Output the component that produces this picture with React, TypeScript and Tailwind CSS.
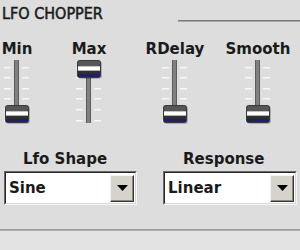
import React from 'react'

const TICKS = [8, 18, 29, 39, 50, 61]

const SLIDERS = [
  { label: 'Min', pos: 'bottom', col: 'w-[34px] ml-0' },
  { label: 'Max', pos: 'top', col: 'w-[58px] ml-[26px]' },
  { label: 'RDelay', pos: 'bottom', col: 'w-[70px] ml-[22px]' },
  { label: 'Smooth', pos: 'bottom', col: 'w-[66px] ml-[15px]' },
] as const

function Fader({ pos }: { pos: 'top' | 'bottom' }) {
  const ty = pos === 'top' ? 1 : 46
  return (
    <svg width="26" height="66" viewBox="0 0 26 66" className="block">
      {TICKS.map((y) => (
        <g key={y}>
          <rect x="0" y={y} width="7" height="1.5" fill="#f8f8f8" />
          <rect x="18" y={y} width="7" height="1.5" fill="#f8f8f8" />
        </g>
      ))}
      <rect x="10" y="1" width="5" height="63" fill="#5c5c5c" />
      <rect x="11" y="1" width="3" height="63" fill="#808080" />
      <g transform={`translate(1 ${ty})`}>
        <rect x="1" y="1" width="24" height="18" rx="3" fill="rgba(0,0,0,0.22)" />
        <rect x="0" y="0" width="24" height="18" rx="3" fill="#3a3a3a" />
        <rect x="1" y="1" width="22" height="5" rx="2" fill="#575757" />
        <rect x="1" y="6" width="22" height="1" fill="#c4c4c4" />
        <rect x="1" y="7" width="22" height="3" fill="#ffffff" />
        <rect x="1" y="10" width="22" height="1" fill="#b0b0b0" />
        <rect x="1" y="11" width="22" height="3" fill="#2f2f2f" />
        <rect x="1" y="14" width="22" height="3" rx="1" fill="#1f1f63" />
      </g>
    </svg>
  )
}

function Combo({ value }: { value: string }) {
  return (
    <div className="h-[34px] border border-t-[#6a6a6a] border-l-[#6a6a6a] border-b-[#f6f6f6] border-r-[#f6f6f6]">
      <div className="h-full flex items-center bg-white border border-t-[#262626] border-l-[#262626] border-b-[#d6d6d6] border-r-[#d6d6d6] pl-[3px] pr-[1px]">
        <span className="flex-1 text-[15px] leading-[18px] font-bold text-[#1a1a1a]">{value}</span>
        <div className="w-[24px] h-[27px] flex items-center justify-center bg-[#d6d3cc] border border-t-[#f4f4f4] border-l-[#f4f4f4] border-r-[#333333] border-b-[#333333] shadow-[inset_-1px_-1px_0_#8a8a8a]">
          <svg width="11" height="6" viewBox="0 0 11 6">
            <polygon points="0,0 11,0 5.5,6" fill="#000000" />
          </svg>
        </div>
      </div>
    </div>
  )
}

export default function App() {
  return (
    <div className="w-[300px] h-[250px] flex flex-col overflow-hidden bg-[#dddddd] text-[#1a1a1a] font-['DejaVu_Sans',sans-serif]">
      <div className="flex items-start pt-[4px] pl-[2px]">
        <span className="text-[16px] leading-[20px] font-normal font-['DejaVu_Sans_Condensed','DejaVu_Sans',sans-serif] [-webkit-text-stroke:0.5px_#1a1a1a]">LFO CHOPPER</span>
        <div className="ml-auto mt-[16px] w-[122px]">
          <div className="h-px bg-[#7a7a7a]" />
          <div className="h-px bg-[#a9a9a9]" />
        </div>
      </div>

      <div className="flex mt-[16px]">
        {SLIDERS.map((s) => (
          <div key={s.label} className={`${s.col} flex flex-col items-center`}>
            <span className="text-[15px] leading-[18px] font-bold whitespace-nowrap">{s.label}</span>
            <div className="mt-[1px]">
              <Fader pos={s.pos} />
            </div>
          </div>
        ))}
      </div>

      <div className="flex mt-[25px]">
        <div className="w-[133px] ml-[4px] flex flex-col">
          <span className="pl-[19px] text-[15px] leading-[18px] font-bold">Lfo Shape</span>
          <div className="mt-[3px]">
            <Combo value="Sine" />
          </div>
        </div>
        <div className="w-[134px] ml-[26px] flex flex-col">
          <span className="pl-[20px] text-[15px] leading-[18px] font-bold">Response</span>
          <div className="mt-[3px]">
            <Combo value="Linear" />
          </div>
        </div>
      </div>

      <div className="mt-[24px] h-px bg-[#9c9c9c]" />
      <div className="h-px bg-[#ababab]" />
      <div className="flex-1 bg-[#e3e3e3]" />
    </div>
  )
}
